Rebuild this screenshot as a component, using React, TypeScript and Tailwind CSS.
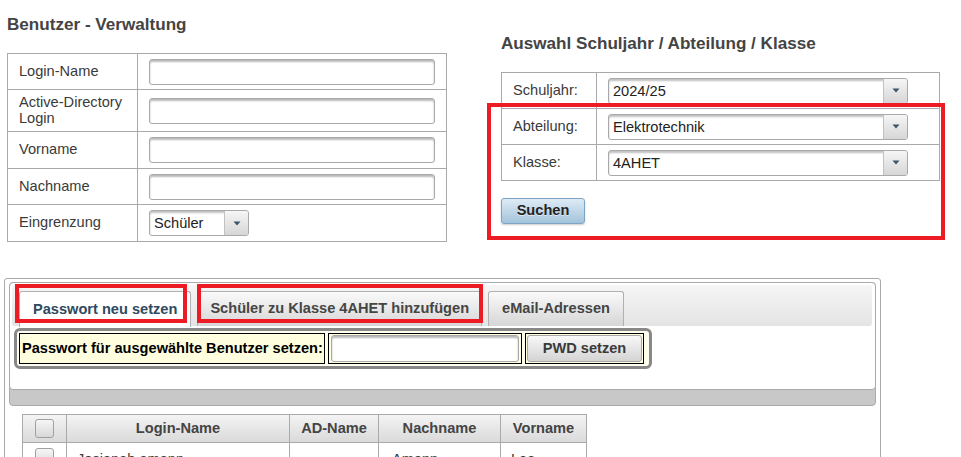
import React from 'react';

const inputCls =
    'h-[26px] w-[286px] rounded-[3px] border border-[#a9a9a9] bg-white shadow-[inset_0_2px_2px_rgba(0,0,0,0.28)]';

const Arrow = () => (
    <svg width="8" height="5" viewBox="0 0 8 5">
        <path d="M0.5 0.5h7L4 4.5z" fill="#3d5568" />
    </svg>
);

interface SelectProps {
    value: string;
    width: string;
}

const Select: React.FC<SelectProps> = ({ value, width }) => (
    <div
        className={`flex h-[26px] ${width} overflow-hidden rounded-[3px] border border-[#a9a9a9] bg-white shadow-[inset_0_2px_2px_rgba(0,0,0,0.25)]`}
    >
        <span className="flex-1 truncate pl-[4px] leading-[24px] text-[#222]">{value}</span>
        <span className="flex w-[24px] items-center justify-center border-l border-[#c2c2c2] bg-gradient-to-b from-[#f6f6f6] to-[#d6d6d6]">
            <Arrow />
        </span>
    </div>
);

const Checkbox = () => (
    <div className="mx-auto h-[19px] w-[19px] rounded-[3px] border border-[#a0a0a0] bg-gradient-to-b from-[#f6f6f6] to-[#d8d8d8]" />
);

export default function App() {
    const userRows: { label: React.ReactNode; h: string; field: React.ReactNode }[] = [
        { label: 'Login-Name', h: 'h-[36px]', field: <div className={inputCls} /> },
        {
            label: (
                <>
                    Active-Directory
                    <br />
                    Login
                </>
            ),
            h: 'h-[42px]',
            field: <div className={inputCls} />,
        },
        { label: 'Vorname', h: 'h-[37px]', field: <div className={inputCls} /> },
        { label: 'Nachname', h: 'h-[36px]', field: <div className={inputCls} /> },
        { label: 'Eingrenzung', h: 'h-[37px]', field: <Select value="Schüler" width="w-[100px]" /> },
    ];

    const selectRows = [
        { label: 'Schuljahr:', value: '2024/25' },
        { label: 'Abteilung:', value: 'Elektrotechnik' },
        { label: 'Klasse:', value: '4AHET' },
    ];

    const students = [
        { login: 'Josianah amann', ad: '', last: 'Amann', first: 'Lea' },
        { login: 'Jonas bauer', ad: '', last: 'Bauer', first: 'Jonas' },
    ];

    return (
        <div className="relative h-[457px] w-[961px] overflow-hidden bg-white font-['Liberation_Sans',Arial,sans-serif] text-[14.6px] text-[#3a3a3a]">
            {/* Top area */}
            <div className="flex">
                {/* Benutzer - Verwaltung */}
                <div className="w-[447px] pl-[7px] pt-[15px]">
                    <h3 className="text-[17.1px] font-bold leading-[19px] text-[#444]">Benutzer - Verwaltung</h3>
                    <table className="mt-[19px] w-[440px] table-fixed border-collapse">
                        <colgroup>
                            <col className="w-[130px]" />
                            <col />
                        </colgroup>
                        <tbody>
                            {userRows.map((r, i) => (
                                <tr key={i} className={r.h}>
                                    <td className="border border-[#aaa] px-[11px] leading-[15.5px]">{r.label}</td>
                                    <td className="border border-[#aaa] px-[11px]">{r.field}</td>
                                </tr>
                            ))}
                        </tbody>
                    </table>
                </div>

                {/* Auswahl */}
                <div className="ml-[54px] w-[440px] pt-[34px]">
                    <h3 className="text-[17.1px] font-bold leading-[19px] text-[#444]">
                        Auswahl Schuljahr / Abteilung / Klasse
                    </h3>
                    <table className="mt-[19px] w-[439px] table-fixed border-collapse">
                        <colgroup>
                            <col className="w-[95px]" />
                            <col />
                        </colgroup>
                        <tbody>
                            {selectRows.map((r) => (
                                <tr key={r.label} className="h-[36px]">
                                    <td className="border border-[#aaa] px-[11px]">{r.label}</td>
                                    <td className="border border-[#aaa] px-[11px]">
                                        <Select value={r.value} width="w-[300px]" />
                                    </td>
                                </tr>
                            ))}
                        </tbody>
                    </table>
                    <button className="mt-[17px] h-[26px] w-[84px] rounded-[3px] border border-[#7ea5c3] bg-gradient-to-b from-[#deebf5] to-[#a2c3db] font-bold text-[#222] shadow-[0_1px_2px_rgba(0,0,0,0.2)] [text-shadow:0_1px_0_rgba(255,255,255,0.6)]">
                        Suchen
                    </button>
                </div>
            </div>

            {/* Bottom panel */}
            <div className="ml-[4px] mt-[36px] h-[300px] w-[877px] rounded-[3px] border border-[#aaa] px-[4px] pt-[3px]">
                <div className="rounded-[4px] border border-[#aaa] bg-[#c8c8c8] pb-[16px]">
                    <div className="-m-px rounded-[4px] border border-[#aaa] bg-white">
                        {/* Tabs header */}
                        <div className="ml-[2px] mr-[3px] mt-[2px] flex h-[41px] items-end gap-[6px] rounded-[3px] bg-gradient-to-b from-[#f6f6f6] to-[#e4e4e4] pl-[7px]">
                            <div className="-mb-px flex h-[36px] items-center rounded-t-[3px] border border-b-0 border-[#b0b0b0] bg-white px-[13px] font-bold text-[#2f4a5e]">
                                Passwort neu setzen
                            </div>
                            <div className="flex h-[35px] items-center rounded-t-[3px] border border-b-0 border-[#b0b0b0] bg-gradient-to-b from-[#fafafa] to-[#d6d6d6] px-[12px] font-bold text-[#454545]">
                                Schüler zu Klasse 4AHET hinzufügen
                            </div>
                            <div className="flex h-[35px] items-center rounded-t-[3px] border border-b-0 border-[#b0b0b0] bg-gradient-to-b from-[#fafafa] to-[#d6d6d6] px-[13px] font-bold text-[#454545]">
                                eMail-Adressen
                            </div>
                        </div>

                        {/* Tab content */}
                        <div className="h-[63px] px-[4px] pt-[2px]">
                            <div className="flex w-[638px] gap-[3px] rounded-[6px] border-[3px] border-[#888] bg-[#fffff0] p-[2px]">
                                <div className="flex h-[31px] w-[306px] items-center whitespace-nowrap border border-black bg-[#ffffe0] px-[2px] font-bold text-black">
                                    Passwort für ausgewählte Benutzer setzen:
                                </div>
                                <div className="flex h-[31px] w-[194px] items-center border border-black bg-[#ffffe0] px-[2px]">
                                    <div className="h-[27px] w-full rounded-[3px] border border-[#a9a9a9] bg-white shadow-[inset_0_2px_2px_rgba(0,0,0,0.28)]" />
                                </div>
                                <div className="flex h-[31px] w-[119px] items-center border border-black bg-[#ffffe0] px-[1px]">
                                    <button className="h-[27px] w-full rounded-[3px] border border-[#a9a9a9] bg-gradient-to-b from-[#f8f8f8] to-[#d4d4d4] font-bold text-[#3a3a3a]">
                                        PWD setzen
                                    </button>
                                </div>
                            </div>
                        </div>
                    </div>
                </div>

                {/* Students table */}
                <table className="ml-[13px] mt-[8px] w-[565px] table-fixed border-collapse">
                    <colgroup>
                        <col className="w-[44px]" />
                        <col className="w-[223px]" />
                        <col className="w-[89px]" />
                        <col className="w-[122px]" />
                        <col />
                    </colgroup>
                    <thead>
                        <tr className="h-[28px] bg-gradient-to-b from-[#f4f4f4] to-[#d9d9d9] font-bold text-[#444]">
                            <th className="border border-[#aaa]">
                                <Checkbox />
                            </th>
                            <th className="border border-[#aaa] text-center">Login-Name</th>
                            <th className="border border-[#aaa] text-center">AD-Name</th>
                            <th className="border border-[#aaa] text-center">Nachname</th>
                            <th className="border border-[#aaa] text-center">Vorname</th>
                        </tr>
                    </thead>
                    <tbody>
                        {students.map((s) => (
                            <tr key={s.login} className="h-[30px] align-top">
                                <td className="border border-[#aaa] pt-[5px]">
                                    <Checkbox />
                                </td>
                                <td className="border border-[#aaa] px-[10px] pt-[6px]">{s.login}</td>
                                <td className="border border-[#aaa] px-[10px] pt-[6px]">{s.ad}</td>
                                <td className="border border-[#aaa] px-[13px] pt-[6px]">{s.last}</td>
                                <td className="border border-[#aaa] px-[10px] pt-[6px]">{s.first}</td>
                            </tr>
                        ))}
                    </tbody>
                </table>
            </div>

            {/* Red annotation frames */}
            <div className="pointer-events-none absolute left-[487px] top-[103px] h-[137px] w-[458px] border-[4px] border-[#ed1c24]" />
            <div className="pointer-events-none absolute left-[15px] top-[284px] h-[39px] w-[172px] border-[4px] border-[#ed1c24]" />
            <div className="pointer-events-none absolute left-[197px] top-[284px] h-[39px] w-[286px] border-[4px] border-[#ed1c24]" />
        </div>
    );
}
